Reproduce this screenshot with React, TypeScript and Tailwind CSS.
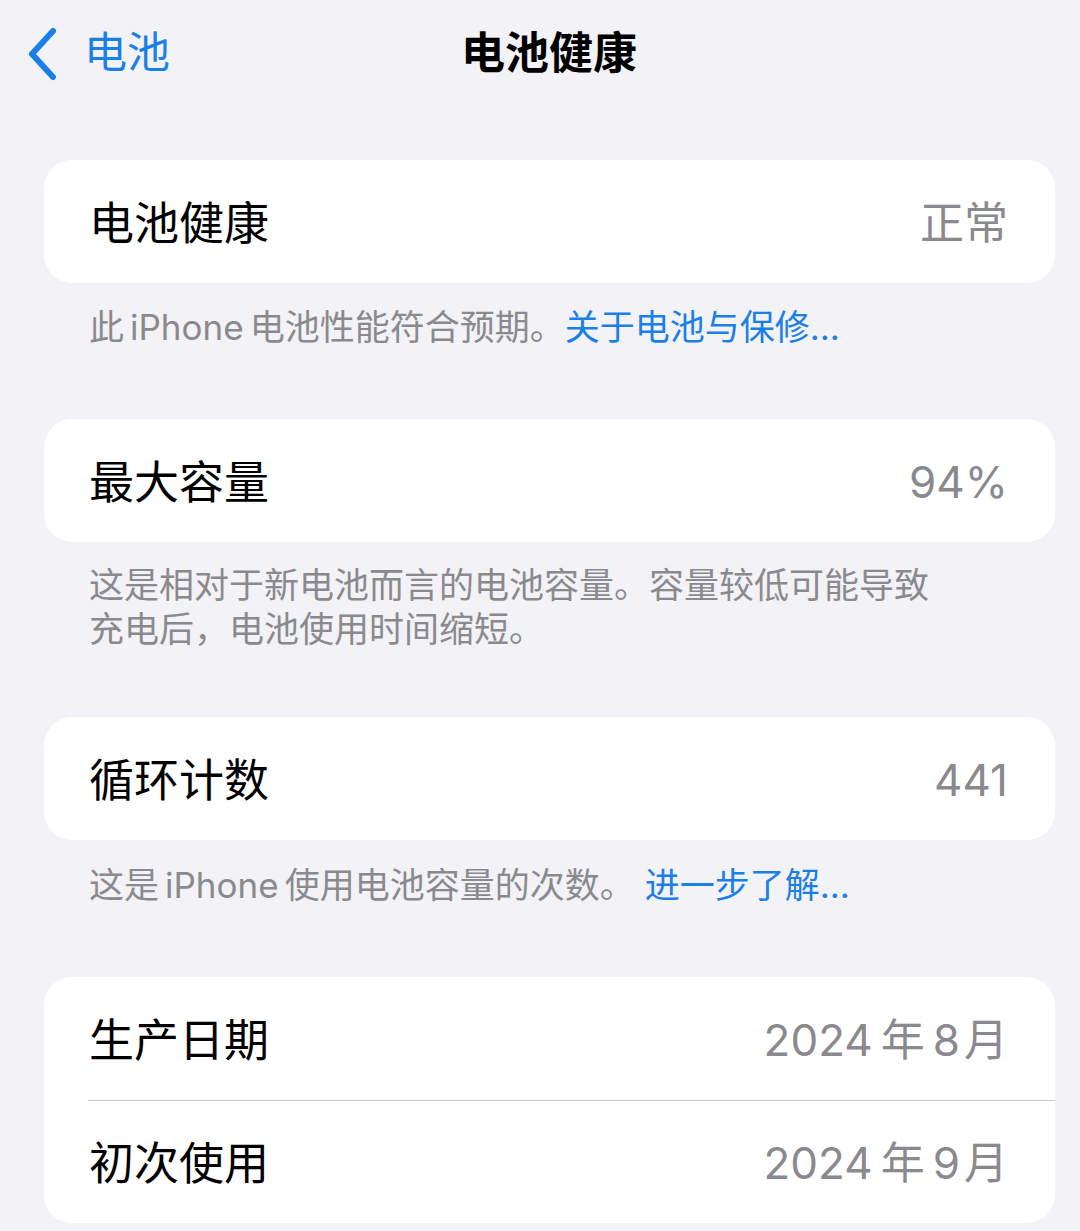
import React from "react";

const font = { fontFamily: 'Inter, "Noto Sans CJK SC", sans-serif' };

function Row({ label, value, divider }: { label: string; value: React.ReactNode; divider?: boolean }) {
  return (
    <div className="relative">
      <div className="flex h-[123px] items-center justify-between pl-[45px] pr-[47px]">
        <span className="mt-[3px] text-[45px] leading-none text-black">{label}</span>
        <span className="mt-[3px] text-[44px] leading-none text-[#8a8a8e]">{value}</span>
      </div>
      {divider && <div className="ml-[44px] h-px bg-[#c8c8cc]" />}
    </div>
  );
}

function Card({ children }: { children: React.ReactNode }) {
  return <div className="ml-[44px] mr-[25px] overflow-hidden rounded-[28px] bg-white">{children}</div>;
}

function DateValue({ year, month }: { year: string; month: string }) {
  return (
    <span className="flex items-center">
      <span>{year}</span>
      <span className="ml-[8px]">年</span>
      <span className="ml-[8px]">{month}</span>
      <span className="ml-[4px]">月</span>
    </span>
  );
}

export default function App() {
  return (
    <div className="h-[1231px] w-[1080px] overflow-hidden bg-[#f2f2f7]" style={font}>
      <div className="relative flex h-[105px] items-center">
        <div className="flex items-center pl-[26px]">
          <svg width="34" height="54" viewBox="0 0 34 54" className="mt-[2px]">
            <path d="M27 4 L6 27 L27 50" fill="none" stroke="#1a7fe8" strokeWidth="6" strokeLinecap="round" strokeLinejoin="round" />
          </svg>
          <span className="ml-[24px] text-[43px] leading-none text-[#1a7fe8]">电池</span>
        </div>
        <div className="absolute left-0 right-0 flex justify-center">
          <span className="ml-[18px] text-[44px] font-semibold leading-none text-black">电池健康</span>
        </div>
      </div>

      <div className="mt-[55px]">
        <Card>
          <Row label="电池健康" value="正常" />
        </Card>
        <div className="px-[89px] pt-[22px] text-[35px] leading-[44px] text-[#8a8a8e]">
          此<span className="ml-[6px] mr-[6px]">iPhone</span>电池性能符合预期。<span className="text-[#1a7fe8]">关于电池与保修...</span>
        </div>
      </div>

      <div className="mt-[70px]">
        <Card>
          <Row label="最大容量" value="94%" />
        </Card>
        <div className="pl-[89px] pr-[140px] pt-[21px] text-[35px] leading-[44px] text-[#8a8a8e]">
          这是相对于新电池而言的电池容量。容量较低可能导致充电后，电池使用时间缩短。
        </div>
      </div>

      <div className="mt-[66px]">
        <Card>
          <Row label="循环计数" value="441" />
        </Card>
        <div className="px-[89px] pt-[23px] text-[35px] leading-[44px] text-[#8a8a8e]">
          这是<span className="ml-[6px] mr-[6px]">iPhone</span>使用电池容量的次数。<span className="ml-[10px] text-[#1a7fe8]">进一步了解...</span>
        </div>
      </div>

      <div className="mt-[70px]">
        <Card>
          <Row label="生产日期" value={<DateValue year="2024" month="8" />} divider />
          <div className="-mt-px">
            <Row label="初次使用" value={<DateValue year="2024" month="9" />} />
          </div>
        </Card>
      </div>
    </div>
  );
}
